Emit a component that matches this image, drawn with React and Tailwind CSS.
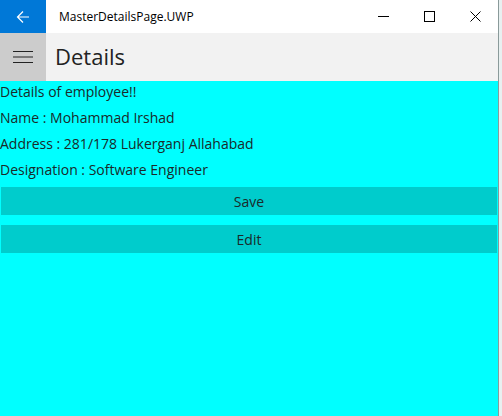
import React from 'react';

const font = { fontFamily: '"Open Sans", "Noto Sans", sans-serif' };

function TitleBar() {
  return (
    <div className="flex h-[33px] bg-white items-stretch">
      <div className="w-[46px] bg-[#0078d7] flex items-center justify-center">
        <svg width="14" height="14" viewBox="0 0 14 14" fill="none" stroke="white" strokeWidth="1.2">
          <path d="M13 7H1.5M7 1.5L1.5 7L7 12.5" />
        </svg>
      </div>
      <div className="flex-1 flex items-center pl-[13px] text-[12px] text-black">MasterDetailsPage.UWP</div>
      <div className="flex items-center">
        <div className="w-[46px] flex items-center justify-center">
          <svg width="11" height="11" viewBox="0 0 11 11"><path d="M0 5.5H11" stroke="black" strokeWidth="1" /></svg>
        </div>
        <div className="w-[46px] flex items-center justify-center">
          <svg width="11" height="11" viewBox="0 0 11 11"><rect x="0.5" y="0.5" width="10" height="10" fill="none" stroke="black" strokeWidth="1" /></svg>
        </div>
        <div className="w-[46px] flex items-center justify-center">
          <svg width="11" height="11" viewBox="0 0 11 11"><path d="M0.5 0.5L10.5 10.5M10.5 0.5L0.5 10.5" stroke="black" strokeWidth="1" /></svg>
        </div>
      </div>
    </div>
  );
}

function Header() {
  return (
    <div className="flex h-[48px] bg-[#f2f2f2]">
      <div className="w-[46px] bg-[#cccccc] flex items-center justify-center">
        <svg width="20" height="14" viewBox="0 0 20 14" stroke="#222" strokeWidth="1.2">
          <path d="M0 1.5H20M0 7H20M0 12.5H20" />
        </svg>
      </div>
      <div className="flex items-center pl-[9px] text-[22px] text-[#222] pb-[2px]">Details</div>
    </div>
  );
}

export default function App() {
  const lines = [
    'Details of employee!!',
    'Name : Mohammad Irshad',
    'Address : 281/178 Lukerganj Allahabad',
    'Designation : Software Engineer',
  ];
  return (
    <div className="w-[502px] h-[416px] flex overflow-hidden" style={font}>
      <div className="w-[498px] flex flex-col">
        <TitleBar />
        <Header />
        <div className="flex-1 bg-[#00ffff] flex flex-col">
          {lines.map(l => (
            <div key={l} className="h-[26px] leading-[22px] text-[14px] text-[#1a2a2a]">{l}</div>
          ))}
          <div className="flex flex-col gap-[10px] px-[1px] pt-[2px]">
            <div className="h-[28px] bg-[#00cccc] flex items-center justify-center text-[14px] text-[#1a2a2a]">Save</div>
            <div className="h-[28px] bg-[#00cccc] flex items-center justify-center text-[14px] text-[#1a2a2a]">Edit</div>
          </div>
        </div>
      </div>
      <div className="w-[1px] bg-[#8a9a9a]" />
      <div className="flex-1 bg-[#e8f0f0]" />
    </div>
  );
}
